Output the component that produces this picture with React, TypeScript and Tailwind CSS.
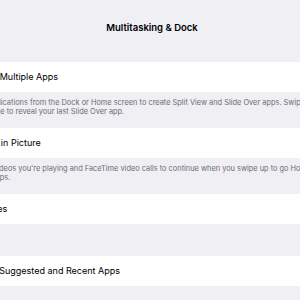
import React from "react";

const Row = ({label, shift}: {label: string; shift: string}) => (
  <div className="flex h-[30px] items-center overflow-hidden whitespace-nowrap bg-white">
    <span className={shift}>{label}</span>
  </div>
);

const Footer = ({lines}: {lines: {text: string; shift: string}[]}) => (
  <div className="flex h-[36px] flex-col overflow-hidden whitespace-nowrap pt-[6px] text-[7.4px] leading-[9px] text-[#6d6d72]">
    {lines.map((l) => (
      <span key={l.text} className={l.shift}>{l.text}</span>
    ))}
  </div>
);

export default function App() {
  return (
    <div className="flex h-[300px] w-[300px] flex-col overflow-hidden bg-[#efeff4] font-['Inter',sans-serif] text-[9px] text-black">
      <div className="flex h-[62px] items-start justify-center pl-[4px] pt-[21px]">
        <h1 className="text-[9.5px] font-semibold">Multitasking &amp; Dock</h1>
      </div>

      <Row label="Allow Multiple Apps" shift="-ml-[26px]" />
      <Footer
        lines={[
          {text: "Allow multiple applications from the Dock or Home screen to create Split View and Slide Over apps. Swipe in from the right", shift: "-ml-[65px]"},
          {text: "edge to reveal your last Slide Over app.", shift: "-ml-[13px]"},
        ]}
      />

      <Row label="Picture in Picture" shift="-ml-[31.5px]" />
      <Footer
        lines={[
          {text: "Allow videos you're playing and FaceTime video calls to continue when you swipe up to go Home or switch", shift: "-ml-[28px]"},
          {text: "apps.", shift: "-ml-[9px]"},
        ]}
      />

      <Row label="Gestures" shift="-ml-[31px]" />
      <div className="h-[32px]" />
      <Row label="Show Suggested and Recent Apps" shift="-ml-[27px]" />
    </div>
  );
}
